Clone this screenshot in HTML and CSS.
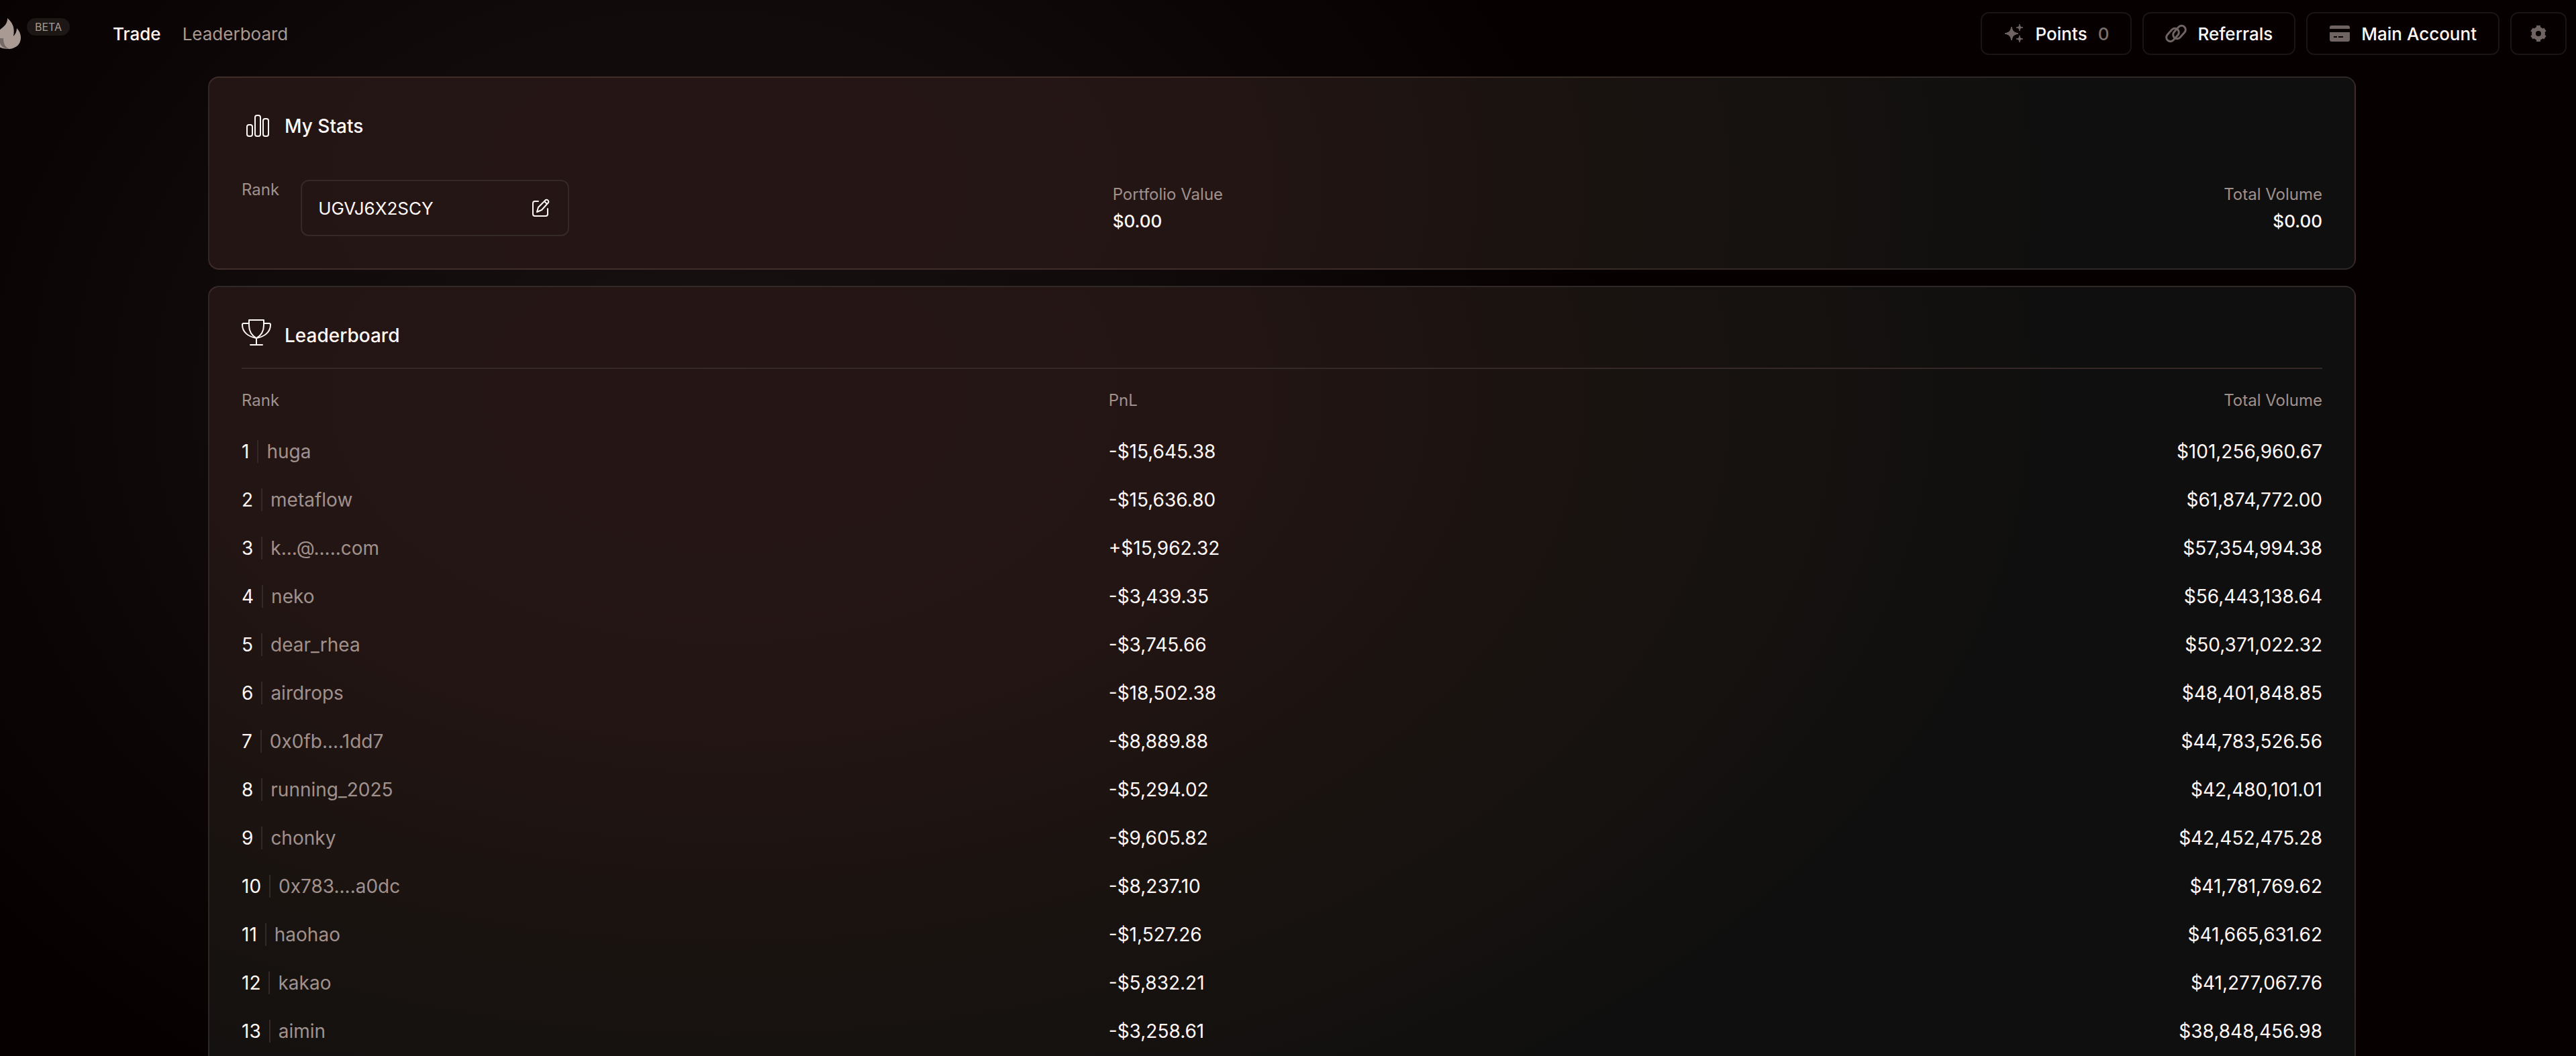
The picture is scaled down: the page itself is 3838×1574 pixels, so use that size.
FILE: index.html
```html
<!DOCTYPE html>
<html lang="en">
<head>
    <meta charset="UTF-8">
    <meta name="viewport" content="width=device-width, initial-scale=1.0">
    <title>Leaderboard</title>
    <link rel="stylesheet" href="styles.css">
</head>
<body>
    <header class="topbar">
        <a href="#" class="logo" aria-label="Home">
            <svg width="44" height="46" viewBox="0 0 44 46">
                <path fill="#a99a94" d="M24 0c9 8 11 15 9 27 3-3 5-7 5-12 4 4 6 9 6 14 0 10-7 16-17 17C13 46 3 41 3 30 3 18 25 16 24 0z"/>
                <path fill="#756966" d="M12 30h6c0 7 2 13 9 16-9 0-15-5-15-16z"/>
            </svg>
        </a>
        <span class="beta">BETA</span>
        <nav class="nav">
            <a href="#" class="active">Trade</a>
            <a href="#">Leaderboard</a>
        </nav>
        <div class="actions">
            <button class="btn">
                <svg width="32" height="28" viewBox="-2 0 32 28" fill="currentColor">
                    <path d="M10 4c2 7 3 8 10 10-7 2-8 3-10 10-2-7-3-8-10-10 7-2 8-3 10-10zM22 0c1 4 1 4 5 5-4 1-4 1-5 5-1-4-1-4-5-5 4-1 4-1 5-5zM22 17c1 4 1 4 5 5-4 1-4 1-5 5-1-4-1-4-5-5 4-1 4-1 5-5z" stroke="currentColor" stroke-linejoin="round"/>
                </svg>
                Points <span class="count">0</span>
            </button>
            <button class="btn">
                <svg width="32" height="28" viewBox="0 0 32 28" fill="none" stroke="currentColor" stroke-width="3">
                    <rect x="-11" y="-6" width="22" height="12" rx="6" transform="translate(11 16) rotate(-48)"/>
                    <rect x="-11" y="-6" width="22" height="12" rx="6" transform="translate(21 12) rotate(-48)"/>
                </svg>
                Referrals
            </button>
            <button class="btn">
                <svg width="32" height="28" viewBox="0 0 32 28" fill="currentColor">
                    <path d="M1 7V5a3 3 0 0 1 3-3h24a3 3 0 0 1 3 3v2z"/>
                    <path fill-rule="evenodd" d="M1 12h30v11a3 3 0 0 1-3 3H4a3 3 0 0 1-3-3zM7 18v2h5v-2zM14 18v2h7v-2z"/>
                </svg>
                Main Account
            </button>
            <button class="btn btn-icon" aria-label="Settings">
                <svg width="28" height="28" viewBox="-14 -14 28 28" fill="none" stroke="currentColor" stroke-width="6">
                    <circle r="7"/>
                    <path stroke-linejoin="round" d="M0-12v4M0 12V8M10-6L7-4M-10 6l3-2M10 6L7 4M-10-6l3 2"/>
                </svg>
            </button>
        </div>
    </header>

    <main class="page">
        <section class="card stats">
            <h2 class="card-title">
                <svg width="44" height="44" viewBox="0 0 44 44" fill="none" stroke="currentColor" stroke-width="2">
                    <rect x="8" y="20" width="8" height="17" rx="3"/>
                    <rect x="20" y="6" width="8" height="31" rx="3"/>
                    <rect x="32" y="11" width="8" height="26" rx="3"/>
                </svg>
                My Stats
            </h2>
            <div class="stats-row">
                <div class="rank">
                    <label for="username">Rank</label>
                    <div class="name-box">
                        <input type="text" id="username" value="UGVJ6X2SCY">
                        <button class="edit" aria-label="Edit name">
                            <svg width="28" height="28" viewBox="0 0 28 28" fill="none" stroke="currentColor" stroke-width="2" stroke-linecap="round" stroke-linejoin="round">
                                <path d="M10 4H5a3 3 0 0 0-3 3v16a3 3 0 0 0 3 3h16a3 3 0 0 0 3-3v-8"/>
                                <path d="M8 20l2-7L21 2a3 3 0 0 1 4 4L15 17zM19 4l4 4"/>
                            </svg>
                        </button>
                    </div>
                </div>
                <dl class="stat">
                    <dt>Portfolio Value</dt>
                    <dd>$0.00</dd>
                </dl>
                <dl class="stat right">
                    <dt>Total Volume</dt>
                    <dd>$0.00</dd>
                </dl>
            </div>
        </section>

        <section class="card">
            <h2 class="card-title board-title">
                <svg width="44" height="40" viewBox="0 0 44 40" fill="none" stroke="currentColor" stroke-width="2" stroke-linecap="round" stroke-linejoin="round">
                    <path d="M11 1h22v8c0 9-4 15-11 19-7-4-11-10-11-19zM11 6H3c-1 0-2 1-2 2 0 11 9 18 21 20 12-2 21-9 21-20 0-1-1-2-2-2h-8M22 28v10M13 38h18"/>
                </svg>
                Leaderboard
            </h2>
            <table class="board">
                <thead>
                    <tr><th class="col-rank">Rank</th><th>PnL</th><th>Total Volume</th></tr>
                </thead>
                <tbody>
                    <tr><td>1<span class="name">huga</span></td><td>-$15,645.38</td><td>$101,256,960.67</td></tr>
                    <tr><td>2<span class="name">metaflow</span></td><td>-$15,636.80</td><td>$61,874,772.00</td></tr>
                    <tr><td>3<span class="name">k...@.....com</span></td><td>+$15,962.32</td><td>$57,354,994.38</td></tr>
                    <tr><td>4<span class="name">neko</span></td><td>-$3,439.35</td><td>$56,443,138.64</td></tr>
                    <tr><td>5<span class="name">dear_rhea</span></td><td>-$3,745.66</td><td>$50,371,022.32</td></tr>
                    <tr><td>6<span class="name">airdrops</span></td><td>-$18,502.38</td><td>$48,401,848.85</td></tr>
                    <tr><td>7<span class="name">0x0fb....1dd7</span></td><td>-$8,889.88</td><td>$44,783,526.56</td></tr>
                    <tr><td>8<span class="name">running_2025</span></td><td>-$5,294.02</td><td>$42,480,101.01</td></tr>
                    <tr><td>9<span class="name">chonky</span></td><td>-$9,605.82</td><td>$42,452,475.28</td></tr>
                    <tr><td>10<span class="name">0x783....a0dc</span></td><td>-$8,237.10</td><td>$41,781,769.62</td></tr>
                    <tr><td>11<span class="name">haohao</span></td><td>-$1,527.26</td><td>$41,665,631.62</td></tr>
                    <tr><td>12<span class="name">kakao</span></td><td>-$5,832.21</td><td>$41,277,067.76</td></tr>
                    <tr><td>13<span class="name">aimin</span></td><td>-$3,258.61</td><td>$38,848,456.98</td></tr>
                </tbody>
            </table>
        </section>
    </main>
</body>
</html>
```
FILE: styles.css
```css
* {
    box-sizing: border-box;
}
body {
    margin: 0;
    height: 100vh;
    overflow: hidden;
    font-family: Inter, sans-serif;
    font-size: 28px;
    color: #fff8f6;
    background: radial-gradient(ellipse 36% 75% at 27% 38%, #171112 0%, #100a0b 50%, #060001 100%) #060001;
}
a {
    color: inherit;
    text-decoration: none;
}
button, input {
    font: inherit;
    color: inherit;
}
svg {
    flex-shrink: 0;
}

/* top bar */
.topbar {
    display: flex;
    align-items: center;
    height: 100px;
    padding-right: 14px;
    font-size: 26px;
}
.logo {
    display: flex;
    margin-left: -13px;
}
.beta {
    margin: -20px 64px 0 9px;
    padding: 0 12px;
    border-radius: 13px;
    background: #1c1614;
    color: #a99a94;
    font-size: 16px;
    line-height: 26px;
}
.nav {
    display: flex;
    gap: 32px;
    color: #a99a94;
}
.nav .active {
    color: #fff8f6;
    font-weight: 500;
}
.actions {
    display: flex;
    gap: 16px;
    margin-left: auto;
}
.btn {
    display: flex;
    align-items: center;
    gap: 16px;
    height: 64px;
    padding: 0 32px;
    border: 2px solid #1a1413;
    border-radius: 12px;
    background: none;
    font-weight: 500;
    cursor: pointer;
}
.btn svg {
    color: #6f6462;
}
.btn-icon {
    padding: 0 26px;
}
.count {
    color: #7c706d;
}

/* cards */
.page {
    display: flex;
    flex-direction: column;
    gap: 24px;
    max-width: 3218px;
    margin: 14px auto 0;
    padding-right: 18px;
}
.card {
    padding: 48px;
    border: 2px solid rgba(255, 205, 190, 0.13);
    border-radius: 16px;
    background: radial-gradient(ellipse 64% 1300px at 24% 160px, #251615 0%, #231514 35%, #191310 65%, #0f0f0f 100%);
}
.card-title {
    display: flex;
    align-items: center;
    gap: 20px;
    height: 48px;
    margin: 0;
    font-size: 28px;
    font-weight: 500;
    line-height: 48px;
}
.stats-row {
    display: grid;
    grid-template-columns: 5fr 5fr 2fr;
    margin-top: 56px;
}
.rank {
    display: flex;
    gap: 32px;
}
.rank label, .stat dt, .board th {
    color: #a0918c;
    font-size: 24px;
    font-weight: 400;
}
.name-box {
    display: flex;
    align-items: center;
    width: 400px;
    height: 84px;
    padding: 0 26px 0 24px;
    border: 2px solid #352927;
    border-radius: 12px;
}
.name-box input {
    flex: 1;
    min-width: 0;
    padding: 0;
    border: none;
    background: none;
    font-size: 26px;
}
.edit {
    display: flex;
    padding: 0;
    border: none;
    background: none;
    cursor: pointer;
}
.stat {
    margin: 0;
    padding: 2px 0 0 6px;
    line-height: 40px;
}
.stat dd {
    margin: 0;
    font-size: 26px;
    font-weight: 500;
}
.right {
    text-align: right;
}

/* leaderboard table */
.board-title {
    align-items: flex-start;
    height: 72px;
}
.board {
    width: 100%;
    border-collapse: collapse;
    table-layout: fixed;
}
.board thead {
    border-top: 2px solid #352927;
}
.board th, .board td {
    height: 72px;
    padding: 0;
    text-align: left;
}
.board th {
    height: 88px;
    padding-top: 6px;
}
.board .col-rank {
    width: 41.67%;
}
.board th:last-child, .board td:last-child {
    text-align: right;
}
.name {
    margin-left: 12px;
    padding-left: 12px;
    border-left: 2px solid #352927;
    color: #a0918c;
}
```
